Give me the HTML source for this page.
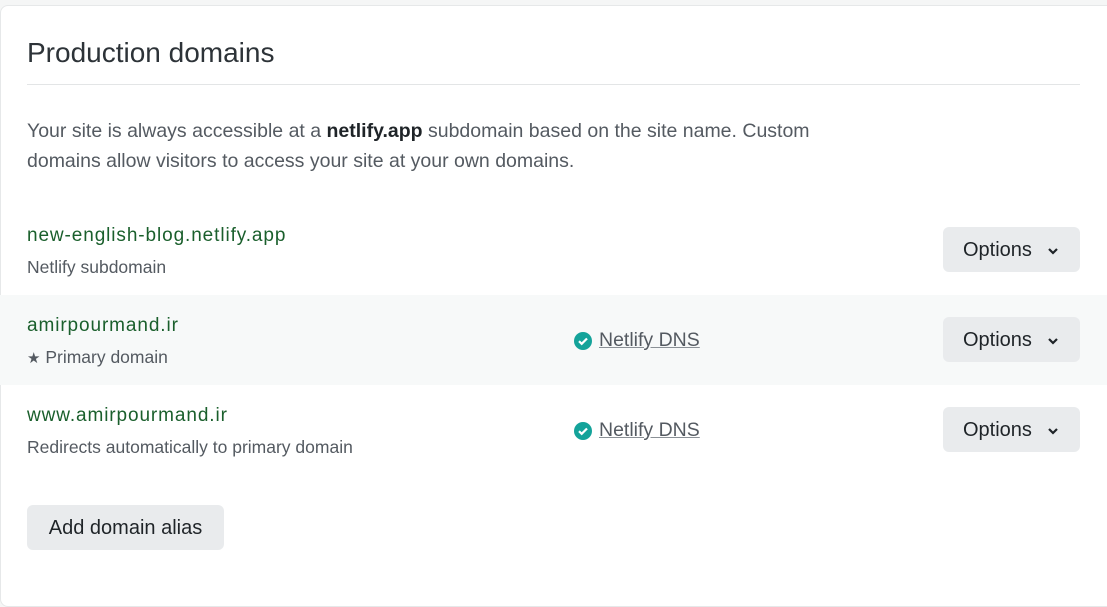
<!DOCTYPE html>
<html><head><style>
body{margin:0;width:1107px;height:574px;background:#f5f6f6;font-family:"Liberation Sans",sans-serif;overflow:hidden;position:relative}
.card{position:absolute;left:0;top:5px;width:1120px;height:600px;background:#fff;border:1px solid #e6e8e9;border-radius:8px}
.abs{position:absolute;white-space:nowrap}
h1{position:absolute;left:27px;top:36px;margin:0;font-size:28px;font-weight:normal;color:#2d3338;line-height:34px}
.hr{position:absolute;left:27px;top:84px;width:1053px;height:1px;background:#e3e5e6}
.p{left:27px;top:116px;font-size:19.5px;line-height:30px;color:#545a61}
.p b{color:#1f2428}
.row{position:absolute;left:0;width:1107px;height:90px}
.d{position:absolute;left:27px;top:20px;font-size:19px;letter-spacing:0.9px;color:#1a5f2c}
.s{position:absolute;left:27px;top:52px;font-size:17.5px;color:#545a61}
.btn{position:absolute;left:943px;top:22px;width:137px;height:45px;background:#e9ebed;border-radius:6px;font-size:20px;color:#1f2428;box-sizing:border-box;padding-left:20px;line-height:47px}
.btn svg{position:absolute;left:104px;top:20px}
.dns{position:absolute;left:574px;top:34px;font-size:19.5px;color:#545a61;text-decoration:underline;text-decoration-color:#8a9096}
.dns span{padding-left:25px}
.dns svg{position:absolute;left:0;top:3px}
</style></head><body>
<div class="card"></div>
<h1>Production domains</h1>
<div class="hr"></div>
<div class="abs p">Your site is always accessible at a <b>netlify.app</b> subdomain based on the site name. Custom<br>domains allow visitors to access your site at your own domains.</div>

<div class="row" style="top:205px">
<div class="d">new-english-blog.netlify.app</div>
<div class="s">Netlify subdomain</div>
<div class="btn">Options<svg width="12" height="8" viewBox="0 0 12 8"><path d="M2 2l4 4 4-4" stroke="#1f2428" stroke-width="2.2" fill="none"/></svg></div>
</div>

<div class="row" style="top:295px;background:#f7f9f9">
<div class="d">amirpourmand.ir</div>
<div class="s"><span style="font-size:15px;color:#545a61">★</span> Primary domain</div>
<div class="dns"><svg width="18" height="18" viewBox="0 0 18 18"><circle cx="9" cy="9" r="9" fill="#14a39a"/><path d="M5 9.2l2.7 2.6L13 6.5" stroke="#fff" stroke-width="2.2" fill="none"/></svg><span>Netlify DNS</span></div>
<div class="btn">Options<svg width="12" height="8" viewBox="0 0 12 8"><path d="M2 2l4 4 4-4" stroke="#1f2428" stroke-width="2.2" fill="none"/></svg></div>
</div>

<div class="row" style="top:385px">
<div class="d">www.amirpourmand.ir</div>
<div class="s">Redirects automatically to primary domain</div>
<div class="dns"><svg width="18" height="18" viewBox="0 0 18 18"><circle cx="9" cy="9" r="9" fill="#14a39a"/><path d="M5 9.2l2.7 2.6L13 6.5" stroke="#fff" stroke-width="2.2" fill="none"/></svg><span>Netlify DNS</span></div>
<div class="btn">Options<svg width="12" height="8" viewBox="0 0 12 8"><path d="M2 2l4 4 4-4" stroke="#1f2428" stroke-width="2.2" fill="none"/></svg></div>
</div>

<div class="abs" style="left:27px;top:505px;width:197px;height:45px;background:#e9ebed;border-radius:6px;font-size:20px;color:#1f2428;line-height:47px;text-align:center">Add domain alias</div>
</body></html>
